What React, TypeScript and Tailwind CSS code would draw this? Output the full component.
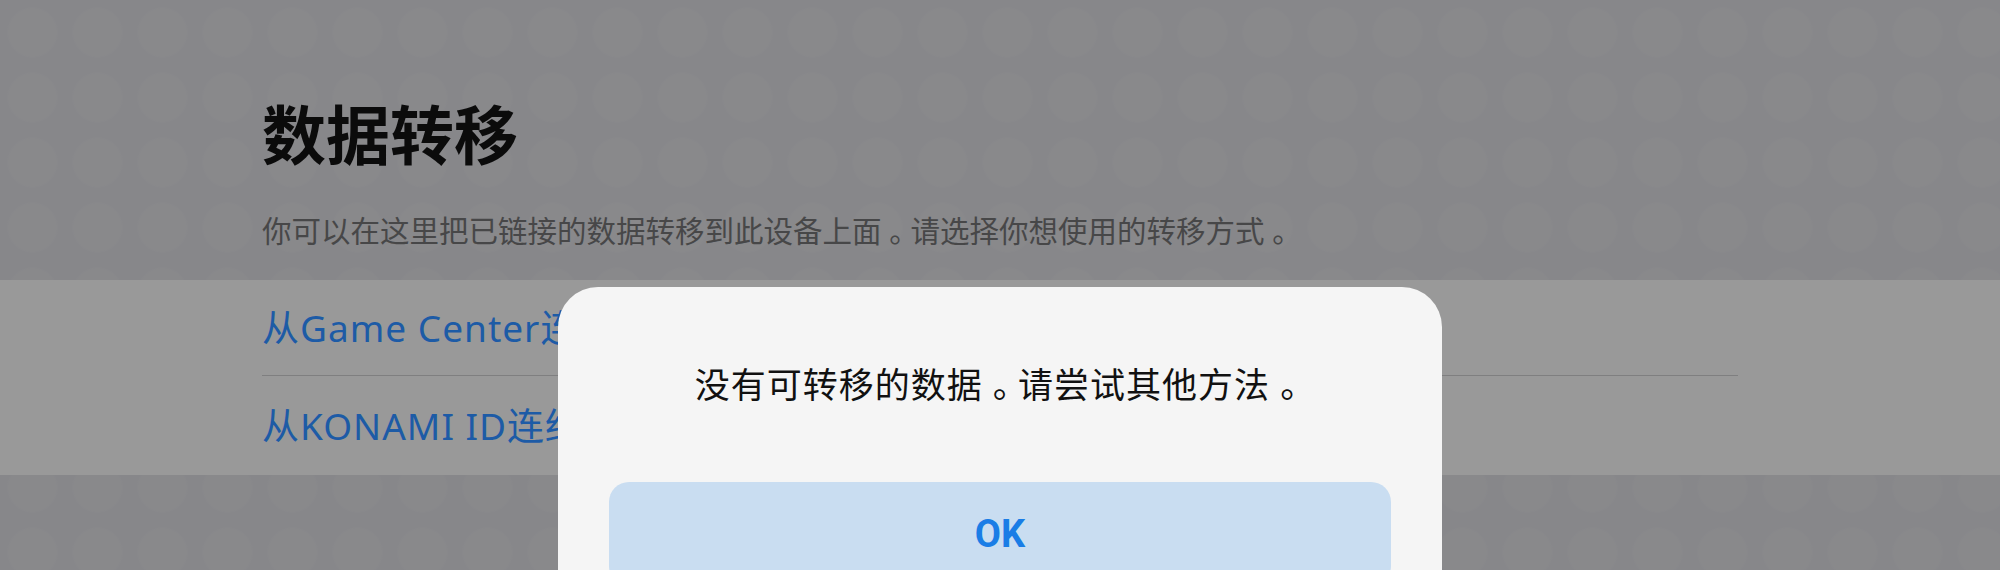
const cjk = "font-['Noto_Sans','Noto_Sans_CJK_SC',sans-serif]";

// the full stop sits centred in its cell in the original UI
function Dot() {
  return (
    <>
      {' '}
      <span className="tracking-[-0.28em]">。</span>
    </>
  );
}

function Row({ label, last }: { label: string; last?: boolean }) {
  return (
    <div className={`flex items-center ${last ? 'h-[99px]' : 'h-[96px] border-b border-[#7f7f80]'}`}>
      <span className={`${cjk} text-[37px] leading-none tracking-[1px] text-[#1d5ba6]`}>{label}</span>
    </div>
  );
}

export default function App() {
  return (
    <div className="relative h-[570px] w-[2000px] overflow-hidden bg-[#87878a]">
      <div className="absolute inset-0 bg-[radial-gradient(circle_at_center,#8b8b8d_0_24px,transparent_26px)] bg-[length:65px_65px] opacity-40" />

      <div className="relative">
        <div className="mx-auto w-[1476px] pt-[103px]">
          <h1 className={`${cjk} text-[64px] leading-none font-semibold text-[#0b0b0b]`}>数据转移</h1>
          <p className={`${cjk} mt-[49px] text-[29.5px] leading-none text-[#474748]`}>
            你可以在这里把已链接的数据转移到此设备上面<Dot />请选择你想使用的转移方式<Dot />
          </p>
        </div>

        <div className="mt-[34px] bg-[#999999]">
          <div className="mx-auto w-[1476px]">
            <Row label="从Game Center连结的数据" />
            <Row label="从KONAMI ID连结的数据" last />
          </div>
        </div>
      </div>

      {/* dialog */}
      <div className="absolute inset-x-0 top-[287px] flex justify-center">
        <div className="w-[884px] rounded-[40px] bg-[#f5f5f5] px-[51px] pt-[80px] pb-[40px]">
          <p className={`${cjk} text-center text-[35px] leading-none tracking-[1px] text-[#111111]`}>
            没有可转移的数据<Dot />请尝试其他方法<Dot />
          </p>
          <button className="mt-[80px] flex h-[104px] w-full items-center justify-center rounded-[20px] bg-[#c9ddf1]">
            <span className="font-['Roboto',sans-serif] text-[38px] leading-none font-bold text-[#1a7de6]">OK</span>
          </button>
        </div>
      </div>
    </div>
  );
}
